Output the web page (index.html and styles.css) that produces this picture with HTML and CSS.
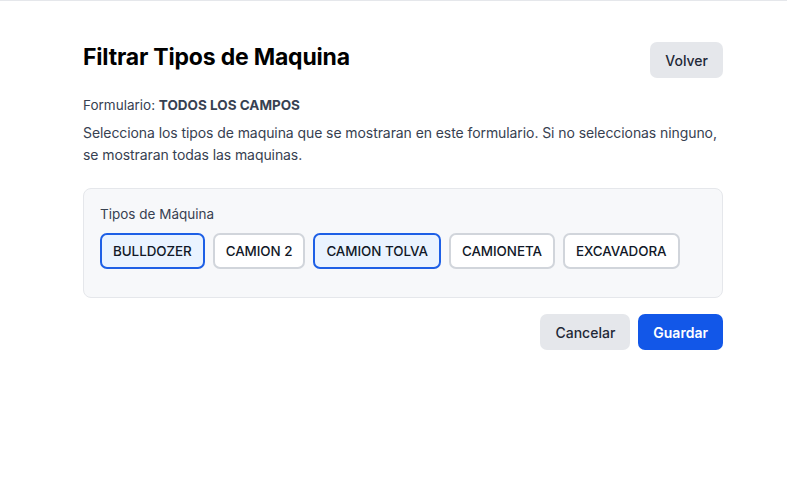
FILE: index.html
```html
<!DOCTYPE html>
<html lang="es">
<head>
<meta charset="utf-8">
<title>Filtrar Tipos de Maquina</title>
<link rel="stylesheet" href="styles.css">
</head>
<body>
<div class="page">
  <div class="container">
    <div class="header">
      <h1 class="title">Filtrar Tipos de Maquina</h1>
      <button class="btn btn-gray">Volver</button>
    </div>
    <p class="form-name">Formulario: <strong>TODOS LOS CAMPOS</strong></p>
    <p class="desc">Selecciona los tipos de maquina que se mostraran en este formulario. Si no seleccionas ninguno, se mostraran todas las maquinas.</p>
    <div class="card">
      <div class="card-label">Tipos de Máquina</div>
      <div class="chips">
        <button class="chip selected">BULLDOZER</button>
        <button class="chip">CAMION 2</button>
        <button class="chip selected">CAMION TOLVA</button>
        <button class="chip">CAMIONETA</button>
        <button class="chip">EXCAVADORA</button>
      </div>
    </div>
    <div class="actions">
      <button class="btn btn-gray">Cancelar</button>
      <button class="btn btn-primary">Guardar</button>
    </div>
  </div>
</div>
</body>
</html>
```
FILE: styles.css
```css
* { box-sizing: border-box; }
html, body { margin: 0; padding: 0; background: #fff; }
body {
  font-family: Inter, "Noto Sans", "Liberation Sans", sans-serif;
  color: #111827;
  border-top: 1px solid #e5e7eb;
  min-height: 504px;
}
.page {
  padding: 41px 64px 40px 83px;
}
.container { width: 640px; }
.header {
  display: flex;
  justify-content: space-between;
  align-items: flex-start;
}
.title {
  margin: 0;
  font-size: 23px;
  line-height: 30px;
  font-weight: 700;
  color: #000;
  letter-spacing: -0.2px;
}
.btn {
  font-family: inherit;
  border: none;
  border-radius: 7px;
  height: 36px;
  padding: 0 15px;
  font-size: 14px;
  font-weight: 500;
  cursor: pointer;
}
.btn-gray { background: #e5e7eb; color: #1f2937; }
.btn-primary { background: #1257e8; color: #fff; font-weight: 600; }
.form-name {
  margin: 17px 0 0;
  font-size: 13.5px;
  line-height: 20px;
  color: #374151;
}
.form-name strong { font-weight: 700; }
.desc {
  margin: 7px 0 0;
  font-size: 14px;
  line-height: 22px;
  color: #374151;
  letter-spacing: -0.08px;
}
.card {
  margin-top: 22px;
  background: #f7f8fa;
  border: 1px solid #e5e7eb;
  border-radius: 8px;
  padding: 16px 16px 28px;
}
.card-label {
  font-size: 13.5px;
  line-height: 18px;
  color: #374151;
}
.chips {
  display: flex;
  flex-wrap: wrap;
  gap: 8px;
  margin-top: 10px;
}
.chip {
  font-family: inherit;
  height: 36px;
  padding: 0 11px;
  background: #fff;
  border: 2px solid #d1d5db;
  border-radius: 7px;
  font-size: 13.4px;
  font-weight: 500;
  color: #111827;
  letter-spacing: -0.05px;
  cursor: pointer;
}
.chip.selected {
  background: #eaf3ff;
  border-color: #1d5fe6;
}
.actions {
  display: flex;
  justify-content: flex-end;
  gap: 8px;
  margin-top: 16px;
}
```
